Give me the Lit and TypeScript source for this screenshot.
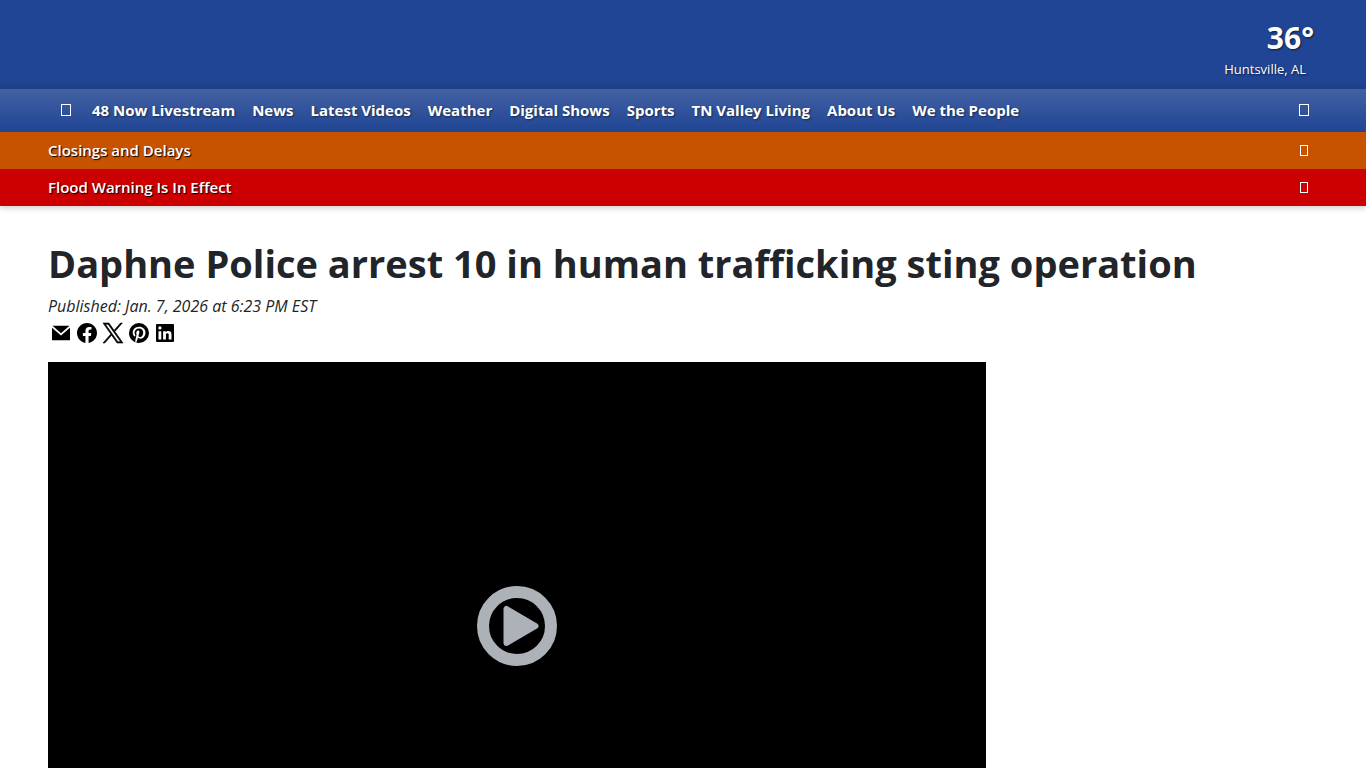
import { LitElement, html, css, svg } from "lit";
import { customElement } from "lit/decorators.js";

const NAV = [
  "48 Now Livestream",
  "News",
  "Latest Videos",
  "Weather",
  "Digital Shows",
  "Sports",
  "TN Valley Living",
  "About Us",
  "We the People",
];

const ALERTS = [
  { text: "Closings and Delays", kind: "closings" },
  { text: "Flood Warning Is In Effect", kind: "flood" },
];

const SHARE = [
  { label: "Email This Link", icon: svg`<path d="M3.500 4.700h17L12 12.200z"/><path d="M3 6.800l9 7.800 9-7.800v12.400H3z"/>` },
  { label: "Share on Facebook", icon: svg`<path d="M12 2C6.500 2 2 6.500 2 12c0 5 3.660 9.130 8.440 9.880v-6.990H7.900V12h2.540V9.800c0-2.510 1.490-3.890 3.780-3.890 1.090 0 2.240.190 2.240.190v2.460h-1.260c-1.240 0-1.630.770-1.630 1.560V12h2.780l-.450 2.890h-2.330v6.990C18.340 21.130 22 17 22 12c0-5.500-4.500-10-10-10z"/>` },
  { label: "Post on X", icon: svg`<path d="M13.900 10.470 21.350 2h-1.760l-6.470 7.350L7.960 2H2l7.810 11.120L2 22h1.760l6.830-7.770L16.040 22H22zm-2.410 2.750-.8-1.110L4.400 3.300h2.720l5.080 7.110.8 1.110 6.600 9.240h-2.710z" stroke="currentColor" stroke-width=".6"/>` },
  { label: "Save to Pinterest", icon: svg`<path d="M9.040 21.540c.960.290 1.930.460 2.960.460a10 10 0 1 0-10-10c0 4.250 2.670 7.900 6.440 9.340-.090-.780-.180-2.070 0-2.960l1.150-4.940s-.290-.580-.290-1.500c0-1.380.860-2.410 1.840-2.410.860 0 1.260.630 1.260 1.440 0 .860-.570 2.090-.860 3.270-.170.980.520 1.840 1.520 1.840 1.780 0 3.160-1.900 3.160-4.580 0-2.400-1.720-4.040-4.190-4.040-2.820 0-4.480 2.100-4.480 4.310 0 .860.280 1.730.740 2.300.090.060.090.140.060.290l-.290 1.090c0 .170-.110.230-.280.110-1.280-.560-2.020-2.380-2.020-3.850 0-3.160 2.240-6.030 6.560-6.030 3.440 0 6.120 2.470 6.120 5.750 0 3.440-2.130 6.200-5.180 6.200-.970 0-1.920-.520-2.260-1.130l-.670 2.370c-.230.860-.860 2.010-1.290 2.700z"/>` },
  { label: "Share on LinkedIn", icon: svg`<path d="M20 3a1 1 0 0 1 1 1v16a1 1 0 0 1-1 1H4a1 1 0 0 1-1-1V4a1 1 0 0 1 1-1zm-1.500 15.500v-5.300a3.260 3.260 0 0 0-3.260-3.260c-.850 0-1.840.520-2.320 1.300v-1.110h-2.790v8.370h2.790v-4.930c0-.770.620-1.400 1.390-1.400a1.400 1.400 0 0 1 1.400 1.400v4.930zM6.880 8.560a1.680 1.680 0 1 0 0-3.370 1.690 1.690 0 0 0 0 3.370m1.390 9.940v-8.370H5.500v8.370z"/>` },
];

const glyphBox = (w: number, h: number, cls: string) => html`
  <svg class=${cls} viewBox="0 0 ${w} ${h}" aria-hidden="true">
    <rect x=".5" y=".5" width=${w - 1} height=${h - 1} />
  </svg>
`;

@customElement("app-root")
export class AppRoot extends LitElement {
  static styles = css`
    :host {
      display: block;
      height: 100vh;
      overflow: hidden;
      background: #fff;
      color: #212529;
      font: 16px/24px "Segoe UI", "Open Sans", "Noto Sans", sans-serif;
    }
    * { box-sizing: border-box; }
    a { color: inherit; text-decoration: none; }
    button {
      display: flex;
      padding: 0;
      border: 0;
      background: none;
      color: inherit;
      font: inherit;
      cursor: pointer;
    }
    svg { display: block; }
    .header { box-shadow: 0 2px 6px rgba(0, 0, 0, 0.2); }
    .brand {
      display: flex;
      justify-content: flex-end;
      height: 89px;
      padding: 20px 52px 0 48px;
      background: linear-gradient(#204594 80px, #1e3f86);
      color: #fff;
    }
    .weather {
      display: flex;
      flex-direction: column;
      align-items: flex-end;
      text-shadow: 1px 1px 2px rgba(0, 0, 0, 0.6);
    }
    .temp {
      font-size: 30px;
      font-weight: 700;
      line-height: 36px;
    }
    .place {
      padding-right: 8px;
      font-size: 13px;
      line-height: 26px;
    }
    .nav {
      display: flex;
      align-items: center;
      height: 43px;
      padding: 0 57px 2px 61px;
      background: linear-gradient(#4361a3, #204594);
      color: #fff;
    }
    .links {
      display: flex;
      flex: 1;
      gap: 17px;
      margin: 0 0 0 21px;
      padding: 0;
      list-style: none;
      font-size: 15px;
      font-weight: 700;
      white-space: nowrap;
      text-shadow: 1px 1px 2px rgba(0, 0, 0, 0.5);
    }
    .box, .box-small {
      fill: none;
      stroke: #fff;
    }
    .box { width: 10px; height: 12px; }
    .box-small { width: 8px; height: 11px; }
    .alert {
      display: flex;
      align-items: center;
      justify-content: space-between;
      height: 37px;
      padding: 0 58px 0 48px;
      color: #fff;
      font-size: 15px;
      font-weight: 600;
      text-shadow: 1px 1px 1px #000;
    }
    .alert-text { padding-bottom: 2px; }
    .closings { background: #c75300; }
    .flood { background: #c00; }
    .article { padding: 33px 48px 0; }
    .title {
      margin: 0;
      font-size: 38px;
      font-weight: 700;
      line-height: 48px;
    }
    .date {
      margin: 7px 0 0;
      font-size: 16px;
      font-style: italic;
      line-height: 24px;
    }
    .share {
      display: flex;
      gap: 2px;
      margin: 3px 0 0;
      padding: 0 1px;
      list-style: none;
      color: #000;
    }
    .share-icon {
      width: 24px;
      height: 24px;
      fill: currentColor;
    }
    .share-link { display: block; }
    .layout {
      display: grid;
      grid-template-columns: minmax(0, 1fr) 300px;
      gap: 32px;
      margin-top: 17px;
    }
    .player {
      display: flex;
      align-items: center;
      justify-content: center;
      aspect-ratio: 16 / 9;
      background: #000;
      color: #adb1b8;
    }
    .play-icon { width: 80px; height: 80px; }
  `;

  render() {
    return html`
      <header class="header">
        <div class="brand">
          <a class="weather" href="#weather">
            <span class="temp">36°</span>
            <span class="place">Huntsville, AL</span>
          </a>
        </div>
        <nav class="nav" aria-label="Main">
          <button type="button" aria-label="Menu">${glyphBox(10, 12, "box")}</button>
          <ul class="links">
            ${NAV.map((item) => html`<li><a href="#">${item}</a></li>`)}
          </ul>
          <button type="button" aria-label="Search">${glyphBox(10, 12, "box")}</button>
        </nav>
        ${ALERTS.map(
          (a) => html`<a class="alert ${a.kind}" href="#">
            <span class="alert-text">${a.text}</span>${glyphBox(8, 11, "box-small")}
          </a>`
        )}
      </header>
      <main class="article">
        <h1 class="title">Daphne Police arrest 10 in human trafficking sting operation</h1>
        <p class="date">Published: Jan. 7, 2026 at 6:23 PM EST</p>
        <ul class="share">
          ${SHARE.map(
            (s) => html`<li>
              <a class="share-link" href="#" aria-label=${s.label}>
                <svg class="share-icon" viewBox="0 0 24 24" aria-hidden="true">${s.icon}</svg>
              </a>
            </li>`
          )}
        </ul>
        <div class="layout">
          <div class="player">
            <button type="button" aria-label="Play video">
              <svg class="play-icon" viewBox="0 0 80 80" aria-hidden="true">
                <circle cx="40" cy="40" r="34" fill="none" stroke="currentColor" stroke-width="12" />
                <path d="M29.500 23v34l29-17z" fill="currentColor" stroke="currentColor" stroke-width="6" stroke-linejoin="round" />
              </svg>
            </button>
          </div>
          <aside></aside>
        </div>
      </main>
    `;
  }
}
